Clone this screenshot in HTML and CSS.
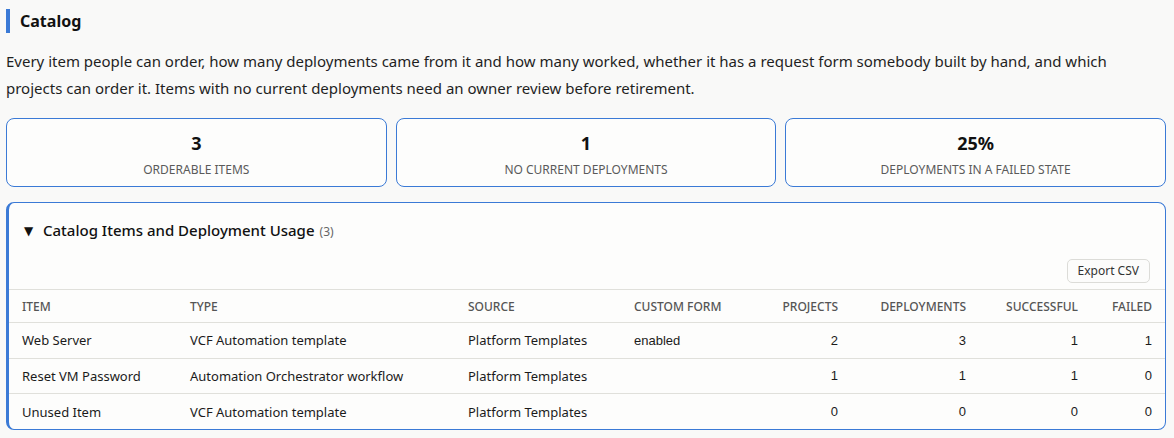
FILE: index.html
```html
<!DOCTYPE html>
<html lang="en">
<head>
<meta charset="utf-8">
<title>Catalog</title>
<link rel="stylesheet" href="styles.css">
</head>
<body>
<main class="page">
  <h1 class="title">Catalog</h1>
  <p class="intro">Every item people can order, how many deployments came from it and how many worked, whether it has a request form somebody built by hand, and which projects can order it. Items with no current deployments need an owner review before retirement.</p>

  <section class="stats">
    <div class="stat"><div class="stat-value">3</div><div class="stat-label">Orderable items</div></div>
    <div class="stat"><div class="stat-value">1</div><div class="stat-label">No current deployments</div></div>
    <div class="stat"><div class="stat-value">25%</div><div class="stat-label">Deployments in a failed state</div></div>
  </section>

  <details class="panel" open>
    <summary class="panel-summary"><span class="caret">▼</span><span class="panel-title">Catalog Items and Deployment Usage</span><span class="count">(3)</span></summary>
    <div class="toolbar"><button class="btn" type="button">Export CSV</button></div>
    <table class="grid">
      <colgroup>
        <col class="c-item"><col class="c-type"><col class="c-source"><col class="c-form">
        <col class="c-proj"><col class="c-dep"><col class="c-succ"><col class="c-fail">
      </colgroup>
      <thead>
        <tr>
          <th>Item</th><th>Type</th><th>Source</th><th>Custom form</th>
          <th class="num">Projects</th><th class="num">Deployments</th><th class="num">Successful</th><th class="num">Failed</th>
        </tr>
      </thead>
      <tbody>
        <tr>
          <td>Web Server</td><td>VCF Automation template</td><td>Platform Templates</td><td class="alt">enabled</td>
          <td class="num alt">2</td><td class="num alt">3</td><td class="num alt">1</td><td class="num alt">1</td>
        </tr>
        <tr>
          <td>Reset VM Password</td><td>Automation Orchestrator workflow</td><td>Platform Templates</td><td class="alt"></td>
          <td class="num alt">1</td><td class="num alt">1</td><td class="num alt">1</td><td class="num alt">0</td>
        </tr>
        <tr>
          <td>Unused Item</td><td>VCF Automation template</td><td>Platform Templates</td><td class="alt"></td>
          <td class="num alt">0</td><td class="num alt">0</td><td class="num alt">0</td><td class="num alt">0</td>
        </tr>
      </tbody>
    </table>
  </details>
</main>
</body>
</html>
```

FILE: styles.css
```css
* { box-sizing: border-box; }

html, body {
  margin: 0;
  background: #f9f9f8;
}

body {
  font-family: "Noto Sans", "Open Sans", "DejaVu Sans", sans-serif;
  color: #1b1b1b;
}

.page {
  padding: 9px 8px 9px 6px;
}

.title {
  margin: 0;
  border-left: 4px solid #3b7ad6;
  padding-left: 10px;
  font-size: 16px;
  font-weight: 700;
  line-height: 24px;
  color: #111;
}

.intro {
  margin: 15px 0 0 0;
  font-size: 15px;
  line-height: 27px;
  color: #1f1f1f;
}

.stats {
  margin-top: 16px;
  display: grid;
  grid-template-columns: repeat(3, 1fr);
  gap: 9px;
}

.stat {
  background: #fdfdfc;
  border: 1px solid #3b7ad6;
  border-radius: 8px;
  height: 69px;
  display: flex;
  flex-direction: column;
  align-items: center;
  padding-top: 12px;
}

.stat-value {
  font-size: 18px;
  font-weight: 700;
  line-height: 24px;
  color: #111;
}

.stat-label {
  margin-top: 7px;
  font-size: 12px;
  line-height: 16px;
  text-transform: uppercase;
  color: #5a5a5a;
}

.panel {
  margin-top: 15px;
  background: #fdfdfc;
  border: 1px solid #3b7ad6;
  border-left: 3px solid #3b7ad6;
  border-radius: 8px;
  overflow: hidden;
}

.panel-summary {
  list-style: none;
  display: flex;
  align-items: baseline;
  padding: 17px 15px 0 15px;
  height: 44px;
  cursor: pointer;
}

.panel-summary::-webkit-details-marker { display: none; }

.caret {
  font-size: 12px;
  width: 19px;
  color: #111;
  font-family: "DejaVu Sans", sans-serif;
  position: relative;
  top: -1px;
}

.panel-title {
  font-size: 15px;
  font-weight: 500;
  color: #111;
}

.count {
  margin-left: 5px;
  font-size: 12px;
  color: #666;
}

.toolbar {
  display: flex;
  justify-content: flex-end;
  padding: 12px 15px 6px 0;
}

.btn {
  font-family: inherit;
  font-size: 12px;
  line-height: 16px;
  color: #333;
  background: #fcfcfb;
  border: 1px solid #dcdcd8;
  border-radius: 5px;
  padding: 3px 10px;
  height: 24px;
}

.grid {
  width: 100%;
  border-collapse: collapse;
  table-layout: fixed;
  font-size: 13px;
}

.c-item { width: 168px; }
.c-type { width: 278px; }
.c-source { width: 166px; }
.c-form { width: 130px; }
.c-proj { width: 100px; }
.c-dep { width: 128px; }
.c-succ { width: 112px; }
.c-fail { width: 74px; }

.grid th {
  text-align: left;
  font-size: 12px;
  font-weight: 500;
  text-transform: uppercase;
  color: #555;
  height: 33px;
  padding: 0 13px;
  border-top: 1px solid #e0e0db;
  border-bottom: 1px solid #e0e0db;
}

.grid td {
  height: 35.5px;
  padding: 0 13px;
  color: #1b1b1b;
  border-bottom: 1px solid #e0e0db;
}

.grid tbody tr:last-child td { border-bottom: none; }

.grid .num { text-align: right; }

.grid td.alt {
  font-family: "Liberation Sans", Arial, sans-serif;
}
```
